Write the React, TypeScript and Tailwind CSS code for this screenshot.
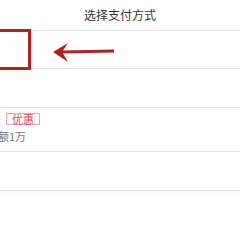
import React from "react";

export default function App() {
  return (
    <div
      className="relative w-[240px] h-[240px] overflow-hidden bg-white"
      style={{ fontFamily: '"Noto Sans CJK SC", "Noto Sans", sans-serif' }}
    >
      <div className="bg-white">
        <div className="h-[30px] flex items-center justify-center text-[12px] text-[#333] border-b border-[#e6e6e6] box-content">
          选择支付方式
        </div>
        <div className="h-[37px] border-b border-[#e6e6e6] box-content" />
        <div className="h-[38px] border-b border-[#e6e6e6] box-content" />
        <div className="h-[38px] border-b border-[#e6e6e6] box-content flex flex-col pt-[5px]">
          <div className="flex items-center h-[12px]">
            <span className="ml-[6px] h-[12px] px-[5px] flex items-center border border-[#f3a3a7] text-[#e5464f] text-[11px] leading-none">
              优惠
            </span>
          </div>
          <div className="ml-[-2px] mt-[5px] text-[11px] leading-[13px] text-[#777] whitespace-nowrap">
            额1万
          </div>
        </div>
        <div className="h-[38px] border-b border-[#e3e3e3] box-content" />
      </div>
      <div className="h-[8px] bg-gradient-to-b from-[#f8f8f8] to-white" />

      <div className="absolute left-[-10px] top-[29px] w-[41px] h-[41px] border-[3px] border-[#b32222]" />
      <svg
        className="absolute left-0 top-0"
        width="240"
        height="240"
        viewBox="0 0 240 240"
      >
        <polygon
          points="53,52 68,43 63,50.5 114,49.5 114,52.5 63,53.5 68,62"
          fill="#b32222"
        />
      </svg>
    </div>
  );
}
